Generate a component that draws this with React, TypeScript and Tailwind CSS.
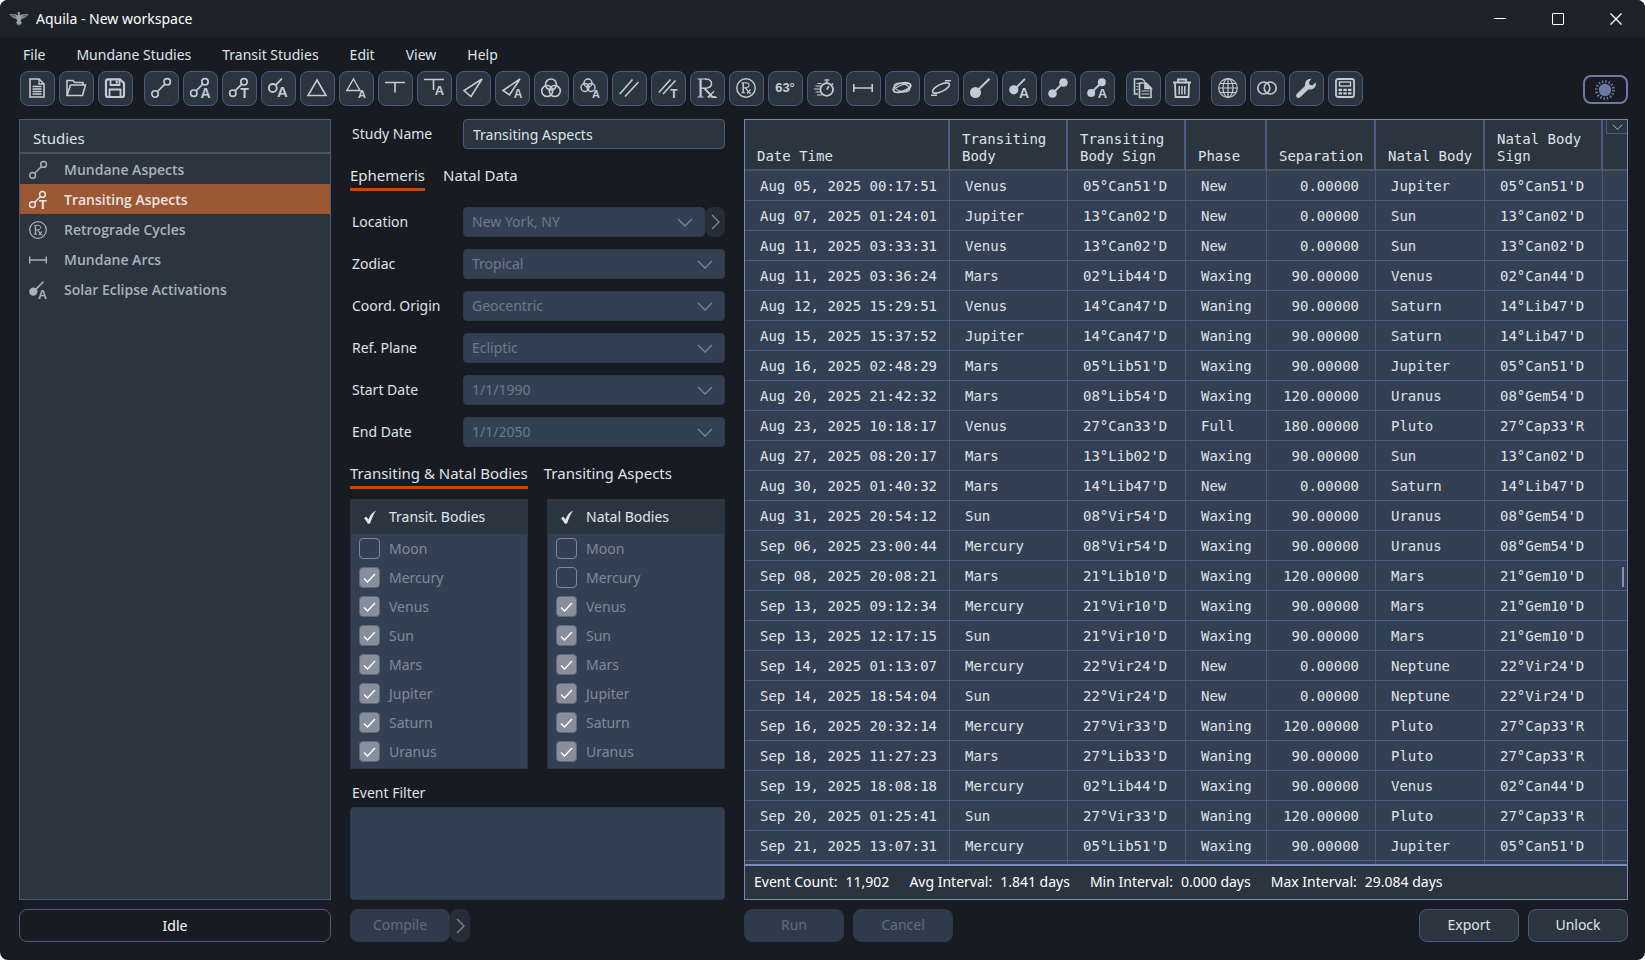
import React from "react";

const UI = "font-['Noto_Sans','Open_Sans',sans-serif]";

function Glyph({ children, className = "size-5" }: { children: React.ReactNode; className?: string }) {
  return (
    <svg
      viewBox="0 0 20 20"
      className={`overflow-visible ${className}`}
      fill="none"
      stroke="currentColor"
      strokeWidth="1.6"
      aria-hidden="true"
    >
      {children}
    </svg>
  );
}

function Letter({ x, y, size = 12, children }: { x: number; y: number; size?: number; children: string }) {
  return (
    <text
      x={x}
      y={y}
      fontSize={size}
      fontWeight="700"
      textAnchor="middle"
      fontFamily="Liberation Sans, sans-serif"
      fill="currentColor"
      stroke="none"
    >
      {children}
    </text>
  );
}

const icons: Record<string, React.ReactNode> = {
  doc: (
    <>
      <path d="M3 1h9l5 5v13H3z" />
      <path d="M12 1v5h5M5.500 8.500h9M5.500 11h9M5.500 13.500h9M5.500 16h9" strokeWidth="1.300" />
    </>
  ),
  folder: (
    <>
      <path d="M1 17.500V2.500h6l1.500 2H17v2.500" />
      <path d="M1 17.500L4.500 7H19.500L16.500 17.500z" />
    </>
  ),
  save: (
    <>
      <path d="M3 1.300h12l4 4V17a2 2 0 0 1-2 2H3a2 2 0 0 1-2-2V3a2 2 0 0 1 2-1.700z" strokeWidth="2.200" />
      <path d="M5.500 1.500v5.500h9V1.500M4.500 19v-7.500h11V19" strokeWidth="1.800" />
      <path d="M11.700 2.500v3" strokeWidth="2" />
    </>
  ),
  aspect: (
    <>
      <circle cx="4" cy="16" r="3.200" />
      <circle cx="16.200" cy="3.800" r="3.200" />
      <path d="M6.300 13.700L13.900 6.100" />
    </>
  ),
  aspectA: (
    <>
      <circle cx="3.800" cy="15.200" r="3.200" />
      <circle cx="15" cy="3.800" r="3.200" />
      <path d="M6.100 12.900L12.700 6.100" />
      <Letter x={15.500} y={19.700} size={14}>A</Letter>
    </>
  ),
  aspectT: (
    <>
      <circle cx="3.800" cy="15.200" r="3.200" />
      <circle cx="15" cy="3.800" r="3.200" />
      <path d="M6.100 12.900L12.700 6.100" />
      <Letter x={15.500} y={19.700} size={14}>T</Letter>
    </>
  ),
  ringA: (
    <>
      <circle cx="4.800" cy="10" r="4" strokeWidth="1.800" />
      <path d="M7.700 7.200L14 .5" strokeWidth="1.800" />
      <Letter x={14.500} y={19.200} size={15}>A</Letter>
    </>
  ),
  triangle: <path d="M10 2L19 17.500H1z" />,
  triangleA: (
    <>
      <path d="M7.500 1L14 12.500H.8z" strokeWidth="1.400" />
      <Letter x={16} y={19.800} size={11}>A</Letter>
    </>
  ),
  tee: <path d="M0 4.500h20M10 4.500v10" />,
  teeA: (
    <>
      <path d="M0 1.500h20M9.500 1.500v10.500" />
      <Letter x={15.500} y={16.500} size={13}>A</Letter>
    </>
  ),
  kite: <path d="M19 1L1 12.500l7 6z" />,
  kiteA: (
    <>
      <path d="M18 1L1 12.500l6.500 4.500z" />
      <Letter x={16} y={19.700} size={12}>A</Letter>
    </>
  ),
  venn: (
    <>
      <circle cx="10" cy="6.500" r="5.500" />
      <circle cx="6.200" cy="13" r="5.500" />
      <circle cx="13.800" cy="13" r="5.500" />
    </>
  ),
  vennA: (
    <>
      <circle cx="8" cy="5" r="4" strokeWidth="1.400" />
      <circle cx="5" cy="9.500" r="4" strokeWidth="1.400" />
      <circle cx="11" cy="9.500" r="4" strokeWidth="1.400" />
      <Letter x={16} y={19.700} size={11}>A</Letter>
    </>
  ),
  parallel: <path d="M.8 16L13.500 1.500M6 18.500L19.500 4" />,
  parallelT: (
    <>
      <path d="M.8 14.500L12.500 1.500M5 16L17.500 2.500" />
      <Letter x={16} y={19.700} size={12}>T</Letter>
    </>
  ),
  rx: (
    <>
      <path d="M.5 1h8.500M.5 19h6M10.500 19h4M17 19.300h3" strokeWidth="1.200" />
      <path d="M3.600 1v18" strokeWidth="2.200" />
      <path d="M8 1c5.500-.2 6.500 2.500 6.500 4.500S13 10 8 10.300H4" strokeWidth="1.500" />
      <path d="M7.500 10.300L15.500 19h3" strokeWidth="1.900" />
      <path d="M17 13.200L11 19.300" strokeWidth="1.300" />
    </>
  ),
  rxRing: (
    <>
      <circle cx="10" cy="10" r="9.200" strokeWidth="1.400" />
      <path d="M5.500 4.800h4.500M5.500 14.700h3.600" strokeWidth="1" />
      <path d="M7.200 5v9.700" strokeWidth="1.500" />
      <path d="M9.500 4.800c3.200 0 3.500 1.300 3.500 2.500s-1 2.500-3.500 2.600H7.500" strokeWidth="1.100" />
      <path d="M9.500 9.900L13.500 15.200h1.500M14.500 11.500L11 15.500" strokeWidth="1.200" />
    </>
  ),
  timer: (
    <>
      <circle cx="12.700" cy="11.500" r="6.300" strokeWidth="1.800" />
      <path d="M12.700 5.500V3M10.500 2h4.500M17.800 6.800l1.200-1.200M12.700 11.500l2.200-3.200" />
      <path d="M1.500 8h5M0 11h5.500M1.500 14h5M3 17h5M3.500 5.500h4" strokeWidth="1.200" />
    </>
  ),
  arc: <path d="M.8 6v8M19.200 6v8M1 10h18" />,
  orbits: (
    <>
      <ellipse cx="10" cy="9.500" rx="9.300" ry="4.500" transform="rotate(-16 10 9.500)" strokeWidth="1.400" />
      <ellipse cx="10" cy="9.500" rx="8" ry="4" transform="rotate(14 10 9.500)" strokeWidth="1.200" />
      <ellipse cx="10" cy="10" rx="9" ry="3" transform="rotate(-22 10 10)" strokeWidth="1.200" />
    </>
  ),
  tilt: (
    <>
      <ellipse cx="10" cy="10" rx="9.300" ry="3.500" transform="rotate(-26 10 10)" />
      <path d="M14 2.700h6M0 17.300h6" />
    </>
  ),
  dot: (
    <>
      <circle cx="5.500" cy="14.500" r="5.500" fill="currentColor" stroke="none" />
      <path d="M8 12L19.500.8" strokeWidth="2" />
    </>
  ),
  dotA: (
    <>
      <circle cx="4.800" cy="11.800" r="4.600" fill="currentColor" stroke="none" />
      <path d="M7 9.800L16 .8" strokeWidth="1.800" />
      <Letter x={15} y={19.900} size={14}>A</Letter>
    </>
  ),
  dots: (
    <>
      <circle cx="4.500" cy="15.500" r="4.300" fill="currentColor" stroke="none" />
      <circle cx="15.500" cy="4.500" r="4.300" fill="currentColor" stroke="none" />
      <path d="M6 14L14 6" strokeWidth="1.800" />
    </>
  ),
  dotsA: (
    <>
      <circle cx="4.200" cy="15" r="4" fill="currentColor" stroke="none" />
      <circle cx="14.800" cy="4.200" r="4" fill="currentColor" stroke="none" />
      <path d="M6 13L13 6" strokeWidth="1.800" />
      <Letter x={15.500} y={19.900} size={13}>A</Letter>
    </>
  ),
  copy: (
    <>
      <path d="M5 16H1.500V1H9l3 2.500" />
      <path d="M3.300 5.500h3M3.300 8.500h2M3.300 11.500h2" strokeWidth="1.200" />
      <path d="M6.500 5H13l5 5v9.500H6.500z" />
      <path d="M12 5v5.500h6z" fill="currentColor" />
      <path d="M8.500 13h8M8.500 16h8" strokeWidth="1.200" />
    </>
  ),
  trash: (
    <>
      <path d="M1 4.500h18M6 4V1.500h8V4M3 5l.5 14h13L17 5" strokeWidth="1.800" />
      <path d="M7.200 8v8.500M10 8v8.500M12.800 8v8.500" strokeWidth="1.500" />
    </>
  ),
  globe: (
    <>
      <circle cx="10" cy="10" r="9.300" strokeWidth="1.200" />
      <ellipse cx="10" cy="10" rx="5" ry="9.300" strokeWidth="1.200" />
      <path d="M10 .7v18.600M.7 10h18.600M2 5.500h16M2 14.500h16" strokeWidth="1.200" />
    </>
  ),
  rings: (
    <>
      <circle cx="6.800" cy="10" r="6" />
      <circle cx="13.200" cy="10" r="6" />
    </>
  ),
  wrench: (
    <>
      <path d="M2.500 17.500L11 9.500" strokeWidth="4.800" strokeLinecap="round" />
      <path
        d="M15.500.8A5.500 5.500 0 0 0 9 7l-.5 3.500L11 12l2-.7a5.600 5.600 0 0 0 6.700-7L16.300 7.500l-2.700-.8-.6-2.600z"
        fill="currentColor"
        stroke="none"
      />
    </>
  ),
  calc: (
    <>
      <rect x="1" y="1" width="18" height="18" rx="2" strokeWidth="1.800" />
      <rect x="4.500" y="4" width="11" height="4" strokeWidth="1.400" />
      <path d="M3.500 11.800h3.500M8.300 11.800h3.500M13 11.800h3.500M3.500 15.300h3.500M8.300 15.300h3.500M13 15.300h3.500" strokeWidth="2.200" />
    </>
  ),
};

const toolGroups: [string, string][][] = [
  [["doc", "New"], ["folder", "Open"], ["save", "Save"]],
  [
    ["aspect", "Mundane Aspects"], ["aspectA", "Aspect Activations"], ["aspectT", "Transiting Aspects"],
    ["ringA", "Body Activations"], ["triangle", "Trines"], ["triangleA", "Trine Activations"],
    ["tee", "T-Square"], ["teeA", "T-Square Activations"], ["kite", "Kite"], ["kiteA", "Kite Activations"],
    ["venn", "Conjunctions"], ["vennA", "Conjunction Activations"], ["parallel", "Parallels"],
    ["parallelT", "Transiting Parallels"], ["rx", "Retrogrades"], ["rxRing", "Retrograde Cycles"],
    ["degree", "Degrees"], ["timer", "Speed"], ["arc", "Mundane Arcs"], ["orbits", "Orbits"],
    ["tilt", "Declination"], ["dot", "Solar Eclipses"], ["dotA", "Solar Eclipse Activations"],
    ["dots", "Lunar Eclipses"], ["dotsA", "Lunar Eclipse Activations"],
  ],
  [["copy", "Copy"], ["trash", "Delete"]],
  [["globe", "Locations"], ["rings", "Orbs"], ["wrench", "Settings"], ["calc", "Calculator"]],
];

const studies: [string, string][] = [
  ["aspect", "Mundane Aspects"],
  ["aspectT", "Transiting Aspects"],
  ["rxRing", "Retrograde Cycles"],
  ["arc", "Mundane Arcs"],
  ["dotA", "Solar Eclipse Activations"],
];

const fields: [string, string][] = [
  ["Zodiac", "Tropical"],
  ["Coord. Origin", "Geocentric"],
  ["Ref. Plane", "Ecliptic"],
  ["Start Date", "1/1/1990"],
  ["End Date", "1/1/2050"],
];

const bodies = ["Moon", "Mercury", "Venus", "Sun", "Mars", "Jupiter", "Saturn", "Uranus"];

const columns: { name: string; col: string; right?: boolean }[] = [
  { name: "Date Time", col: "w-[205px]" },
  { name: "Transiting Body", col: "w-[118px]" },
  { name: "Transiting Body Sign", col: "w-[118px]" },
  { name: "Phase", col: "w-[81px]" },
  { name: "Separation", col: "w-[109px]", right: true },
  { name: "Natal Body", col: "w-[109px]" },
  { name: "Natal Body Sign", col: "w-[118px]" },
];

const rows = `Aug 05, 2025 00:17:51|Venus|05°Can51'D|New|0.00000|Jupiter|05°Can51'D
Aug 07, 2025 01:24:01|Jupiter|13°Can02'D|New|0.00000|Sun|13°Can02'D
Aug 11, 2025 03:33:31|Venus|13°Can02'D|New|0.00000|Sun|13°Can02'D
Aug 11, 2025 03:36:24|Mars|02°Lib44'D|Waxing|90.00000|Venus|02°Can44'D
Aug 12, 2025 15:29:51|Venus|14°Can47'D|Waning|90.00000|Saturn|14°Lib47'D
Aug 15, 2025 15:37:52|Jupiter|14°Can47'D|Waning|90.00000|Saturn|14°Lib47'D
Aug 16, 2025 02:48:29|Mars|05°Lib51'D|Waxing|90.00000|Jupiter|05°Can51'D
Aug 20, 2025 21:42:32|Mars|08°Lib54'D|Waxing|120.00000|Uranus|08°Gem54'D
Aug 23, 2025 10:18:17|Venus|27°Can33'D|Full|180.00000|Pluto|27°Cap33'R
Aug 27, 2025 08:20:17|Mars|13°Lib02'D|Waxing|90.00000|Sun|13°Can02'D
Aug 30, 2025 01:40:32|Mars|14°Lib47'D|New|0.00000|Saturn|14°Lib47'D
Aug 31, 2025 20:54:12|Sun|08°Vir54'D|Waxing|90.00000|Uranus|08°Gem54'D
Sep 06, 2025 23:00:44|Mercury|08°Vir54'D|Waxing|90.00000|Uranus|08°Gem54'D
Sep 08, 2025 20:08:21|Mars|21°Lib10'D|Waxing|120.00000|Mars|21°Gem10'D
Sep 13, 2025 09:12:34|Mercury|21°Vir10'D|Waxing|90.00000|Mars|21°Gem10'D
Sep 13, 2025 12:17:15|Sun|21°Vir10'D|Waxing|90.00000|Mars|21°Gem10'D
Sep 14, 2025 01:13:07|Mercury|22°Vir24'D|New|0.00000|Neptune|22°Vir24'D
Sep 14, 2025 18:54:04|Sun|22°Vir24'D|New|0.00000|Neptune|22°Vir24'D
Sep 16, 2025 20:32:14|Mercury|27°Vir33'D|Waning|120.00000|Pluto|27°Cap33'R
Sep 18, 2025 11:27:23|Mars|27°Lib33'D|Waning|90.00000|Pluto|27°Cap33'R
Sep 19, 2025 18:08:18|Mercury|02°Lib44'D|Waxing|90.00000|Venus|02°Can44'D
Sep 20, 2025 01:25:41|Sun|27°Vir33'D|Waning|120.00000|Pluto|27°Cap33'R
Sep 21, 2025 13:07:31|Mercury|05°Lib51'D|Waxing|90.00000|Jupiter|05°Can51'D
||||||`
  .split("\n")
  .map((line) => line.split("|"));

const stats: [string, string][] = [
  ["Event Count:", "11,902"],
  ["Avg Interval:", "1.841 days"],
  ["Min Interval:", "0.000 days"],
  ["Max Interval:", "29.084 days"],
];

function Chevron({ className = "h-[9px] w-4", right = false }: { className?: string; right?: boolean }) {
  return right ? (
    <svg viewBox="0 0 9 16" className="h-4 w-[9px]" fill="none" stroke="currentColor" strokeWidth="1.300" aria-hidden="true">
      <path d="M1 1l7 7-7 7" />
    </svg>
  ) : (
    <svg viewBox="0 0 16 9" className={className} fill="none" stroke="currentColor" strokeWidth="1.300" aria-hidden="true">
      <path d="M1 1l7 7 7-7" />
    </svg>
  );
}

const fieldLabel = "w-[113px] pb-px pl-[2px]";

function SelectField({ id, value }: { id: string; value: string }) {
  return (
    <div className="relative min-w-0 flex-1 text-[#7b8694]">
      <select
        id={id}
        disabled
        className="block h-[30px] w-full appearance-none rounded border border-[#2c3a48] bg-[#334054] pl-2 text-[14px] leading-5 text-[#6c7a89] opacity-100"
      >
        <option>{value}</option>
      </select>
      <span className="pointer-events-none absolute inset-y-0 right-3 flex items-center">
        <Chevron />
      </span>
    </div>
  );
}

function BodyList({ title, unchecked }: { title: string; unchecked: string[] }) {
  return (
    <section className="min-w-0 flex-1 border border-[#2a3540] bg-[#334054]">
      <h3 className="flex h-[34px] items-center gap-3 bg-[#2a3540] pb-px pl-3 text-[#e2e6ec]">
        <svg viewBox="0 0 14 14" className="size-[14px]" fill="currentColor" aria-hidden="true">
          <path d="M1 8.500L3.200 6.500 5.500 9.500C7 5.500 9.500 2 13 .5 10.500 4.500 8.500 9 7 13.500L4.800 13.800C4 12 2.800 10.200 1 8.500z" />
        </svg>
        {title}
      </h3>
      <ul className="pb-[2px]">
        {bodies.map((b) => (
          <li key={b}>
            <label className="flex h-[29px] items-center gap-[9px] pl-2 text-[#7f8a98]">
              <span className="relative flex size-[21px]">
                <input
                  type="checkbox"
                  disabled
                  defaultChecked={!unchecked.includes(b)}
                  className="peer size-full appearance-none rounded border border-[#7f8896] checked:border-[#5e697a] checked:bg-[#888e9b]"
                />
                <svg
                  viewBox="0 0 21 21"
                  className="pointer-events-none absolute inset-0 hidden size-full peer-checked:block"
                  fill="none"
                  stroke="#fff"
                  strokeWidth="1.400"
                  aria-hidden="true"
                >
                  <path d="M5 11.500l3.500 3.500L16 7" />
                </svg>
              </span>
              {b}
            </label>
          </li>
        ))}
      </ul>
    </section>
  );
}

function Tabs({ tabs, gap }: { tabs: string[]; gap: string }) {
  return (
    <div role="tablist" className={`flex ${gap}`}>
      {tabs.map((t, i) => (
        <button
          key={t}
          role="tab"
          aria-selected={i === 0}
          className={`h-[30px] border-b-[3px] text-[15px] leading-5 ${i === 0 ? "border-[#c54a05]" : "border-transparent"}`}
        >
          {t}
        </button>
      ))}
    </div>
  );
}

function Eagle() {
  return (
    <svg viewBox="0 0 20 14" className="h-[14px] w-5" fill="#97a3b0" aria-hidden="true">
      <path d="M0 2.200h6.500L9 3.500V1.500L8.200.6 9.500.1l1.300.4.3 1V3.500L13.500 2.200H20l-1.500 1.300H19L17 4.800h.5L15.500 6h.5l-3.500.8-.8 2.200 1.800 2.500-1.700-.4.700 2.200-1.500-1.200L10 13.900l-1-1.800-1.500 1.200.7-2.200-1.700.4L8.300 9l-.8-2.200L4 6h.5L2.500 4.800H3L1 3.500h.5z" />
      <path d="M1.500 3.500h5M3 4.800h4.500M13.500 3.500h5M12.500 4.800H17" stroke="#1c2228" strokeWidth=".5" />
    </svg>
  );
}

const actionBtn = "h-[33px] w-[100px] rounded-lg border pb-px";

export default function App() {
  return (
    <div className="bg-white">
      <div className={`${UI} flex h-screen flex-col overflow-hidden rounded-[8px] bg-[#191b22] text-[14px] leading-5 text-[#dfe3e8]`}>
        <header className="flex h-[37px] shrink-0 items-center bg-[#1c2228] pl-[9px] text-white">
          <Eagle />
          <h1 className="ml-[7px] flex-1">Aquila - New workspace</h1>
          <div className="flex h-full">
            <button aria-label="Minimize" className="flex w-[58px] items-center justify-center">
              <svg viewBox="0 0 12 12" className="size-3" stroke="currentColor" aria-hidden="true"><path d="M0 5.500h12" /></svg>
            </button>
            <button aria-label="Maximize" className="flex w-[58px] items-center justify-center">
              <svg viewBox="0 0 12 12" className="size-3" fill="none" stroke="currentColor" aria-hidden="true">
                <rect x=".5" y=".5" width="11" height="11" rx=".5" />
              </svg>
            </button>
            <button aria-label="Close" className="flex w-[58px] items-center justify-center">
              <svg viewBox="0 0 12 12" className="size-3" stroke="currentColor" strokeWidth="1.300" aria-hidden="true"><path d="M.5.500l11 11M11.500.500l-11 11" /></svg>
            </button>
          </div>
        </header>

        <nav className="mt-[6px] flex h-6 shrink-0 items-center gap-[31px] pl-[23px]">
          {["File", "Mundane Studies", "Transit Studies", "Edit", "View", "Help"].map((m) => (
            <button key={m}>{m}</button>
          ))}
        </nav>

        <div className="mt-1 flex shrink-0 items-center gap-[11px] pr-[17px] pl-5">
          {toolGroups.map((group, g) => (
            <div key={g} className="flex gap-1">
              {group.map(([icon, label]) => (
                <button
                  key={icon}
                  aria-label={label}
                  className="flex size-[35px] items-center justify-center rounded-lg border border-[#4a5a80] bg-[#2a3540] pr-px pb-px text-[#c3cbd9]"
                >
                  {icon === "degree" ? (
                    <span className="font-['Liberation_Sans',sans-serif] text-[13px] font-bold">63°</span>
                  ) : (
                    <Glyph>{icons[icon]}</Glyph>
                  )}
                </button>
              ))}
            </div>
          ))}
          <button
            aria-label="Toggle theme"
            className="mt-[2px] ml-auto flex h-[29px] w-[45px] items-center justify-center rounded-lg border-2 border-[#6b7aa5] pr-px text-[#6b7aa5]"
          >
            <Glyph>
              <circle cx="10" cy="10" r="6.200" fill="currentColor" stroke="none" />
              <circle cx="10" cy="10" r="8.600" strokeWidth="2.800" strokeDasharray="1.400 1.977" />
            </Glyph>
          </button>
        </div>

        <main className="mt-[13px] grid min-h-0 flex-1 grid-cols-[312px_375px_minmax(0,1fr)] gap-[19px] pr-[17px] pb-[18px] pl-[19px]">
          <aside className="flex min-h-0 flex-col gap-[9px]">
            <section className="flex-1 border border-[#4a5a80] bg-[#2a3540]">
              <h2 className="flex h-[34px] items-center border-b-2 border-[#4a535f] pt-[3px] pl-[13px] text-[15px]">Studies</h2>
              <ul>
                {studies.map(([icon, name], i) => (
                  <li key={name}>
                    <button
                      className={`flex h-[30px] w-full items-center gap-[17px] pt-px pl-[9px] text-left font-['Open_Sans','Noto_Sans',sans-serif] font-semibold ${
                        i === 1 ? "bg-[#9c5835] text-[#e8e4e4]" : "text-[#a9b1bb]"
                      }`}
                    >
                      <Glyph className="size-[18px]">{icons[icon]}</Glyph>
                      {name}
                    </button>
                  </li>
                ))}
              </ul>
            </section>
            <div role="status" className="flex h-[33px] items-center justify-center rounded-lg border border-[#4a5a80] pt-px text-white">
              Idle
            </div>
          </aside>

          <section className="flex min-h-0 flex-col">
            <div className="flex h-[30px] items-center">
              <label htmlFor="name" className={fieldLabel}>Study Name</label>
              <input
                id="name"
                defaultValue="Transiting Aspects"
                className="h-[30px] min-w-0 flex-1 rounded border border-[#4a5a80] bg-[#2a3540] px-[9px]"
              />
            </div>
            <div className="mt-[12px]">
              <Tabs tabs={["Ephemeris", "Natal Data"]} gap="gap-[18px]" />
            </div>
            <div className="mt-4 flex flex-col gap-3">
              <div className="flex h-[30px] items-center">
                <label htmlFor="Location" className={fieldLabel}>Location</label>
                <SelectField id="Location" value="New York, NY" />
                <button disabled aria-label="More locations" className="flex h-[30px] w-5 items-center justify-center rounded-lg bg-[#262c38] text-[#7f8896]">
                  <Chevron right />
                </button>
              </div>
              {fields.map(([label, value]) => (
                <div key={label} className="flex h-[30px] items-center">
                  <label htmlFor={label} className={fieldLabel}>{label}</label>
                  <SelectField id={label} value={value} />
                </div>
              ))}
            </div>
            <div className="mt-[12px]">
              <Tabs tabs={["Transiting & Natal Bodies", "Transiting Aspects"]} gap="gap-4" />
            </div>
            <div className="mt-[10px] flex gap-[19px]">
              <BodyList title="Transit. Bodies" unchecked={["Moon"]} />
              <BodyList title="Natal Bodies" unchecked={["Moon", "Mercury"]} />
            </div>
            <label htmlFor="filter" className="mt-[14px] pl-[2px]">Event Filter</label>
            <textarea
              id="filter"
              disabled
              className="mt-1 min-h-0 flex-1 resize-none rounded border border-[#2c3a48] bg-[#334054]"
            />
            <div className="mt-[9px] flex">
              <button disabled className={`${actionBtn} border-[#2c3947] bg-[#2f3b4d] text-[#5f6d7e]`}>Compile</button>
              <button disabled aria-label="Compile options" className="flex h-[33px] w-5 items-center justify-center rounded-lg bg-[#262c38] text-[#7f8896]">
                <Chevron right />
              </button>
            </div>
          </section>

          <section className="flex min-h-0 flex-col gap-[9px]">
            <div className="relative flex min-h-0 flex-1 flex-col border border-[#7b8bb8] bg-[#334054]">
              <div className="min-h-0 flex-1 overflow-hidden">
                <table className="w-full table-fixed border-separate border-spacing-0 font-['DejaVu_Sans_Mono',monospace] text-[14px] leading-[17px]">
                  <colgroup>
                    {columns.map((c) => (
                      <col key={c.name} className={c.col} />
                    ))}
                    <col />
                  </colgroup>
                  <thead>
                    <tr className="h-[51px] bg-[#2a3540] text-left align-bottom">
                      {columns.map((c) => (
                        <th
                          key={c.name}
                          scope="col"
                          className="border-r-2 border-b-2 border-r-[#4c5c86] border-b-[#4a535f] pb-1 pl-3 font-normal"
                        >
                          {c.name}
                        </th>
                      ))}
                      <td className="border-b-2 border-b-[#4a535f]" />
                    </tr>
                  </thead>
                  <tbody>
                    {rows.map((row, r) => (
                      <tr key={r} className="h-[30px]">
                        {row.map((cell, c) => (
                          <td
                            key={c}
                            className={`border-r border-b border-[#4a5a80] pt-[2px] whitespace-nowrap ${
                              columns[c].right ? "pr-4 text-right" : "pl-[15px]"
                            }`}
                          >
                            {cell}
                          </td>
                        ))}
                        <td className="border-b border-[#4a5a80]" />
                      </tr>
                    ))}
                  </tbody>
                </table>
              </div>
              <button
                aria-label="Choose columns"
                className="absolute top-0 right-0 flex h-[14px] w-[21px] items-center justify-center border-b border-l border-[#4a5a80] bg-[#2a3540] text-[#c3cbd9]"
              >
                <Chevron className="h-[6px] w-[11px]" />
              </button>
              <span className="absolute top-[447px] right-[3px] h-[20px] w-[2px] bg-[#8b93a0]" />
              <dl className="flex h-[35px] shrink-0 items-center gap-5 border-t-2 border-[#7b8bb8] bg-[#2a3540] pb-px pl-[9px] text-white">
                {stats.map(([k, v]) => (
                  <div key={k} className="flex gap-2">
                    <dt>{k}</dt>
                    <dd>{v}</dd>
                  </div>
                ))}
              </dl>
            </div>
            <div className="flex gap-[9px]">
              <button disabled className={`${actionBtn} border-[#2c3947] bg-[#2f3b4d] text-[#5f6d7e]`}>Run</button>
              <button disabled className={`${actionBtn} border-[#2c3947] bg-[#2f3b4d] text-[#5f6d7e]`}>Cancel</button>
              <button className={`${actionBtn} ml-auto border-[#4a5a80] bg-[#2a3540]`}>Export</button>
              <button className={`${actionBtn} border-[#4a5a80] bg-[#2a3540]`}>Unlock</button>
            </div>
          </section>
        </main>
      </div>
    </div>
  );
}
